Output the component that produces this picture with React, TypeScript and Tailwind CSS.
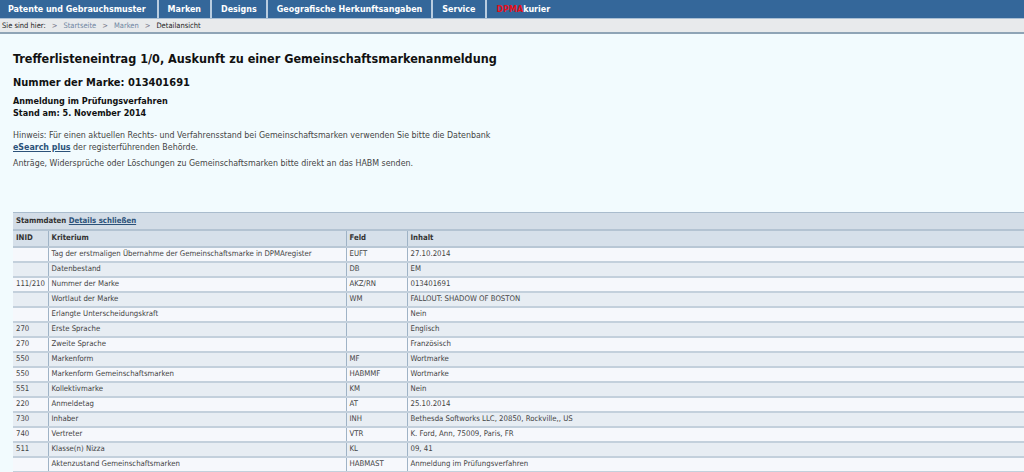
const navItems = [
  "Patente und Gebrauchsmuster",
  "Marken",
  "Designs",
  "Geografische Herkunftsangaben",
  "Service",
];

const rows: [string, string, string, string][] = [
  ["", "Tag der erstmaligen Übernahme der Gemeinschaftsmarke in DPMAregister", "EUFT", "27.10.2014"],
  ["", "Datenbestand", "DB", "EM"],
  ["111/210", "Nummer der Marke", "AKZ/RN", "013401691"],
  ["", "Wortlaut der Marke", "WM", "FALLOUT: SHADOW OF BOSTON"],
  ["", "Erlangte Unterscheidungskraft", "", "Nein"],
  ["270", "Erste Sprache", "", "Englisch"],
  ["270", "Zweite Sprache", "", "Französisch"],
  ["550", "Markenform", "MF", "Wortmarke"],
  ["550", "Markenform Gemeinschaftsmarken", "HABMMF", "Wortmarke"],
  ["551", "Kollektivmarke", "KM", "Nein"],
  ["220", "Anmeldetag", "AT", "25.10.2014"],
  ["730", "Inhaber", "INH", "Bethesda Softworks LLC, 20850, Rockville,, US"],
  ["740", "Vertreter", "VTR", "K. Ford, Ann, 75009, Paris, FR"],
  ["511", "Klasse(n) Nizza", "KL", "09, 41"],
  ["", "Aktenzustand Gemeinschaftsmarken", "HABMAST", "Anmeldung im Prüfungsverfahren"],
  ["", "", "", ""],
];

export default function App() {
  return (
    <div className="w-[1024px] h-[472px] overflow-hidden bg-[#f2fbfe] font-['DejaVu_Sans_Condensed','Liberation_Sans',sans-serif] text-[#333]">
      {/* top navigation */}
      <nav className="flex h-[19px] bg-[#34679a] border-b border-[#a9bfd4]">
        {navItems.map((item, i) => (
          <div key={item} className="flex items-center">
            <a
              className={`${i === 0 ? "pl-2 pr-[11px]" : "px-[9px]"} text-[8.9px] font-bold text-white leading-[19px] whitespace-nowrap`}
            >
              {item}
            </a>
            <span className="w-[2px] h-full bg-[#b9cde0]" />
          </div>
        ))}
        <a className="px-[10px] text-[8.9px] font-bold leading-[19px] whitespace-nowrap text-white">
          <span className="text-[#e3111b]">DPMA</span>kurier
        </a>
      </nav>

      {/* breadcrumb */}
      <div className="h-[15px] bg-[#e8eaec] border-b-2 border-[#8fa4b6] flex items-center pl-[2px] text-[7.5px] text-[#222] gap-[6px] whitespace-nowrap">
        <span>Sie sind hier:</span>
        <span className="text-[#778]">&gt;</span>
        <a className="text-[#6f86a2]">Startseite</a>
        <span className="text-[#778]">&gt;</span>
        <a className="text-[#6f86a2]">Marken</a>
        <span className="text-[#778]">&gt;</span>
        <span>Detailansicht</span>
      </div>

      <main className="pl-[13px] pt-[17px]">
        <h1 className="text-[12.5px] leading-[16px] font-bold text-[#111]">
          Trefferlisteneintrag 1/0, Auskunft zu einer Gemeinschaftsmarkenanmeldung
        </h1>
        <h2 className="mt-[9px] text-[11px] leading-[14px] font-bold text-[#111]">
          Nummer der Marke: 013401691
        </h2>
        <p className="mt-[5px] text-[9px] leading-[12px] font-bold text-[#111]">
          Anmeldung im Prüfungsverfahren
          <br />
          Stand am: 5. November 2014
        </p>
        <p className="mt-[10px] text-[8.8px] leading-[12px] text-[#444]">
          Hinweis: Für einen aktuellen Rechts- und Verfahrensstand bei Gemeinschaftsmarken verwenden Sie bitte die Datenbank
          <br />
          <a className="font-bold text-[#2c5279] underline">eSearch plus</a> der registerführenden Behörde.
        </p>
        <p className="mt-[4px] text-[8.8px] leading-[12px] text-[#444]">
          Anträge, Widersprüche oder Löschungen zu Gemeinschaftsmarken bitte direkt an das HABM senden.
        </p>

        <table className="mt-[43px] w-[1040px] table-fixed border-collapse text-[7.75px] text-[#444]">
          <colgroup>
            <col className="w-[35px]" />
            <col className="w-[298px]" />
            <col className="w-[61px]" />
            <col />
          </colgroup>
          <thead>
            <tr className="h-[17px] bg-[#d3dde7] border-t border-[#a9bccd] border-b-2 border-b-[#b3c3d2]">
              <th colSpan={4} className="text-left font-bold text-[#333] pl-[3px]">
                Stammdaten{" "}
                <a className="text-[#2c5279] underline">Details schließen</a>
              </th>
            </tr>
            <tr className="h-[17px] bg-[#d6e0ea] border-b-2 border-[#b8c7d5] text-left text-[#333]">
              <th className="font-bold pl-[3px] border-r border-[#9fb3c6]">INID</th>
              <th className="font-bold pl-[3px] border-r border-[#9fb3c6]">Kriterium</th>
              <th className="font-bold pl-[3px] border-r border-[#9fb3c6]">Feld</th>
              <th className="font-bold pl-[3px]">Inhalt</th>
            </tr>
          </thead>
          <tbody>
            {rows.map((r, i) => (
              <tr
                key={i}
                className={`h-[15px] border-b-2 border-[#c3d0dc] ${i % 2 === 0 ? "bg-[#f6f8fc]" : "bg-[#e7edf3]"}`}
              >
                <td className="pl-[3px] border-r border-[#9fb3c6] whitespace-nowrap">{r[0]}</td>
                <td className="pl-[3px] border-r border-[#9fb3c6] whitespace-nowrap">{r[1]}</td>
                <td className="pl-[3px] border-r border-[#9fb3c6] whitespace-nowrap">{r[2]}</td>
                <td className="pl-[3px] whitespace-nowrap">{r[3]}</td>
              </tr>
            ))}
          </tbody>
        </table>
      </main>
    </div>
  );
}
